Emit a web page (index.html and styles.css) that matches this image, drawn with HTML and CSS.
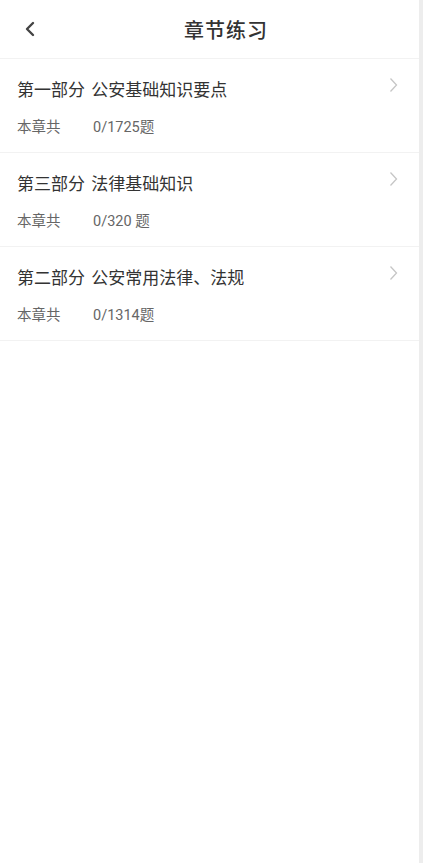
FILE: index.html
```html
<!DOCTYPE html>
<html lang="zh-CN">
<head>
  <meta charset="UTF-8">
  <meta name="viewport" content="width=device-width, initial-scale=1.0">
  <title>章节练习</title>
  <link rel="stylesheet" href="styles.css">
</head>
<body>
  <div class="page">
    <!-- ヘッダー -->
    <div class="header">
      <div class="back">
        <svg width="12" height="16" viewBox="0 0 12 16">
          <polyline points="9,2 3,8 9,14" fill="none" stroke="#444" stroke-width="2.4" stroke-linecap="round" stroke-linejoin="round"/>
        </svg>
      </div>
      <div class="title">章节练习</div>
    </div>

    <!-- 章節リスト -->
    <div class="chapter-list">
      <div class="chapter">
        <div class="chapter-body">
          <div class="chapter-name">第一部分 公安基础知识要点</div>
          <div class="chapter-info"><span class="label">本章共</span><span>0/1725题</span></div>
        </div>
        <svg class="arrow" width="9" height="16" viewBox="0 0 9 16">
          <polyline points="1.5,1.5 7.5,8 1.5,14.5" fill="none" stroke="#c6c6c6" stroke-width="1.3"/>
        </svg>
      </div>
      <div class="chapter">
        <div class="chapter-body">
          <div class="chapter-name">第三部分 法律基础知识</div>
          <div class="chapter-info"><span class="label">本章共</span><span>0/320 题</span></div>
        </div>
        <svg class="arrow" width="9" height="16" viewBox="0 0 9 16">
          <polyline points="1.5,1.5 7.5,8 1.5,14.5" fill="none" stroke="#c6c6c6" stroke-width="1.3"/>
        </svg>
      </div>
      <div class="chapter">
        <div class="chapter-body">
          <div class="chapter-name">第二部分 公安常用法律、法规</div>
          <div class="chapter-info"><span class="label">本章共</span><span>0/1314题</span></div>
        </div>
        <svg class="arrow" width="9" height="16" viewBox="0 0 9 16">
          <polyline points="1.5,1.5 7.5,8 1.5,14.5" fill="none" stroke="#c6c6c6" stroke-width="1.3"/>
        </svg>
      </div>
    </div>
  </div>
</body>
</html>
```

FILE: styles.css
```css
/* ベース */
html, body {
  margin: 0;
  padding: 0;
  height: 100%;
}
body {
  font-family: "Roboto", "Noto Sans CJK SC", sans-serif;
  background-color: #fff;
  color: #333;
}
.page {
  min-height: 100%;
  box-sizing: border-box;
  border-right: 4px solid #ededed; /* スクロールバー部分 */
}

/* ヘッダー */
.header {
  display: flex;
  align-items: center;
  height: 58px;
  padding-right: 27px;
  border-bottom: 1px solid #f2f2f2;
}
.back {
  width: 60px;
  padding-left: 24px;
  box-sizing: border-box;
  display: flex;
  align-items: center;
}
.title {
  flex: 1;
  text-align: center;
  font-size: 20px;
  font-weight: 500;
  color: #333;
  letter-spacing: 1px;
}

/* 章節リスト */
.chapter {
  display: flex;
  align-items: flex-start;
  padding: 18px 21px 14px 17px;
  border-bottom: 1px solid #f2f2f2;
}
.chapter-body {
  flex: 1;
}
.chapter-name {
  font-size: 17px;
  line-height: 26px;
  color: #333;
  word-spacing: 2px;
}
.chapter-info {
  display: flex;
  margin-top: 15px;
  font-size: 14.5px;
  line-height: 20px;
  color: #666;
}
.chapter-info .label {
  width: 76px;
}
.arrow {
  margin-top: 0;
}
```
